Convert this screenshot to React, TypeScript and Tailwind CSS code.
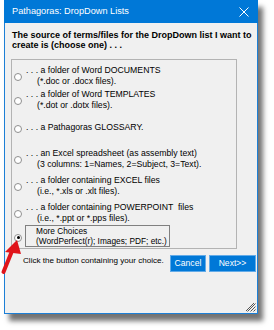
import React from "react";

const font = { fontFamily: '"Liberation Sans", Arial, sans-serif' };

function Radio({ checked }: { checked?: boolean }) {
  return (
    <div className="w-[8px] h-[8px] rounded-full border border-[#8f8f8f] bg-white flex items-center justify-center shrink-0">
      {checked && <div className="w-[3px] h-[3px] rounded-full bg-black" />}
    </div>
  );
}

type Opt = { l1: string; l2?: string; mt: string };

const options: Opt[] = [
  { l1: ". . . a folder of Word DOCUMENTS", l2: "(*.doc or .docx files).", mt: "mt-[5px]" },
  { l1: ". . . a folder of Word TEMPLATES", l2: "(*.dot or .dotx files).", mt: "mt-[3px]" },
  { l1: ". . . a Pathagoras GLOSSARY.", mt: "mt-[12px]" },
  { l1: ". . . an Excel spreadsheet (as assembly text)", l2: "(3 columns: 1=Names, 2=Subject, 3=Text).", mt: "mt-[15px]" },
  { l1: ". . . a folder containing EXCEL files", l2: "(i.e., *.xls or .xlt files).", mt: "mt-[6px]" },
  { l1: ". . . a folder containing POWERPOINT  files", l2: "(i.e., *.ppt or *.pps files).", mt: "mt-[6px]" },
];

export default function App() {
  return (
    <div className="w-[274px] h-[330px] bg-white relative text-[8.7px] text-black whitespace-pre" style={font}>
      <div className="ml-[4px] w-[254px] h-[314px] bg-[#f0f0f0] border border-t-0 border-[#1c7fd6] shadow-[5px_7px_5px_rgba(0,0,0,0.55)] flex flex-col">
        {/* title bar */}
        <div className="h-[23px] -mx-px bg-[#0078d7] text-white flex items-center justify-between pl-[8px] pr-[9px]">
          <span className="text-[9.2px]">Pathagoras: DropDown Lists</span>
          <svg width="10" height="10" viewBox="0 0 10 10">
            <path d="M0.5 0.5 L9.5 9.5 M9.5 0.5 L0.5 9.5" stroke="white" strokeWidth="1" />
          </svg>
        </div>

        <div className="pl-[7px] pt-[7px] font-bold leading-[10px] text-[9px]">
          <div>The source of terms/files for the DropDown list I want to</div>
          <div>create is (choose one) . . .</div>
        </div>

        {/* group box */}
        <div className="ml-[6px] mt-[9px] w-[226px] h-[190px] border border-[#b3b3b3] flex flex-col pl-[2px]">
          {options.map((o, i) => (
            <div key={i} className={`flex items-center gap-[4px] ${o.mt}`}>
              <div className="pt-[3px]">
                <Radio />
              </div>
              <div className="leading-[10.5px]">
                <div>{o.l1}</div>
                {o.l2 && <div className="pl-[11px]">{o.l2}</div>}
              </div>
            </div>
          ))}
          <div className="flex items-center gap-[4px] mt-[2px]">
            <div className="pt-[3px]">
              <Radio checked />
            </div>
            <div className="w-[145px] h-[22px] -ml-[1px] border border-[#808080] bg-[#f0f0f0] leading-[9.5px] text-[8.3px] pl-[10px] pt-[1px]">
              <div>More Choices</div>
              <div>(WordPerfect(r); Images; PDF; etc.)</div>
            </div>
          </div>
        </div>

        <div className="flex items-start mt-[6px]">
          <div className="pl-[18px] pt-[0px] text-[8.1px] flex-1">Click the button containing your choice.</div>
          <button className="w-[36px] h-[17px] bg-[#0078d7] text-white text-[8.6px] border border-[#63abe8] mr-[3px]">
            Cancel
          </button>
          <button className="w-[47px] h-[17px] bg-[#0078d7] text-white text-[8.6px] border border-[#63abe8] mr-[1px]">
            Next&gt;&gt;
          </button>
        </div>

        <div className="flex-1 flex items-end justify-end pr-[1px] pb-[1px]">
          <svg width="10" height="10" viewBox="0 0 10 10">
            <path d="M9.5 1.5 L1.5 9.5 M9.5 4.5 L4.5 9.5 M9.5 7.5 L7.5 9.5 M8 1 L0 9" stroke="#444" strokeWidth="0.9" />
          </svg>
        </div>
      </div>

      {/* red arrow */}
      <svg className="absolute left-0 top-[239px]" width="24" height="36" viewBox="0 0 24 36">
        <path d="M3.5 33 L12 12" stroke="#e0141b" strokeWidth="4" strokeLinecap="round" />
        <path d="M17 1 L5 13 L21 15 Z" fill="#e0141b" />
      </svg>
    </div>
  );
}
